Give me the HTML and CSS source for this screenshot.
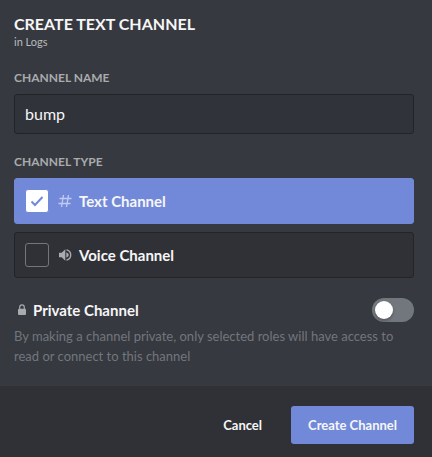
FILE: index.html
```html
<!DOCTYPE html>
<html lang="en">
<head>
<meta charset="utf-8">
<meta name="viewport" content="width=device-width, initial-scale=1">
<title>Create Text Channel</title>
<link rel="stylesheet" href="styles.css">
</head>
<body>
<form class="modal">
  <div class="content">
    <header class="header">
      <h1 class="title">CREATE TEXT CHANNEL</h1>
      <p class="subtitle">in Logs</p>
    </header>

    <div class="field">
      <label class="label" for="name">CHANNEL NAME</label>
      <input class="input" id="name" type="text" value="bump">
    </div>

    <div class="field" role="radiogroup" aria-labelledby="type-label">
      <div class="label" id="type-label">CHANNEL TYPE</div>
      <div class="options">
        <label class="option">
          <input class="option-input" type="radio" name="type" checked>
          <span class="box"><svg class="check" viewBox="0 0 14 14" aria-hidden="true"><path d="M1.5 7.5 5 11 12.5 3"/></svg></span>
          <svg class="option-icon" viewBox="0 0 14 14" fill="none" stroke="currentColor" stroke-width="1.300" aria-hidden="true"><path d="M5.500 1 3.500 13M10.500 1 8.500 13M1.500 4.500H13.500M.5 9.500H12.500"/></svg>
          <span class="option-name">Text Channel</span>
        </label>
        <label class="option">
          <input class="option-input" type="radio" name="type">
          <span class="box"><svg class="check" viewBox="0 0 14 14" aria-hidden="true"><path d="M1.5 7.5 5 11 12.5 3"/></svg></span>
          <svg class="option-icon" viewBox="0 0 14 14" fill="none" stroke="currentColor" aria-hidden="true"><path fill="currentColor" stroke="none" d="M1 4.800H3.700L7.300 1.200V12.800L3.700 9.200H1Z"/><path fill="currentColor" stroke="none" d="M8.300 4.200Q10.800 5.200 10.800 7T8.300 9.800Z"/><path stroke-width="1.400" d="M8.500 1.900A5.200 5.200 0 0 1 8.500 12.100"/></svg>
          <span class="option-name">Voice Channel</span>
        </label>
      </div>
    </div>

    <div class="private">
      <div class="private-row">
        <label class="private-label" for="private">
          <svg class="lock" viewBox="0 0 10 12" aria-hidden="true"><path d="M2.700 5V3.200a2.300 2.300 0 0 1 4.600 0V5" fill="none" stroke="currentColor" stroke-width="1.200"/><rect x="1" y="4.800" width="8" height="6.200" rx="1" fill="currentColor"/></svg>
          Private Channel
        </label>
        <input class="switch" id="private" type="checkbox" role="switch" aria-describedby="private-note">
      </div>
      <p class="note" id="private-note">By making a channel private, only selected roles will have access to read or connect to this channel</p>
    </div>
  </div>

  <footer class="footer">
    <button class="button button-link" type="button">Cancel</button>
    <button class="button button-primary" type="submit">Create Channel</button>
  </footer>
</form>
</body>
</html>
```
FILE: styles.css
```css
* {
  box-sizing: border-box;
}

body {
  margin: 0;
  background: #2f3136;
  color: #f6f6f7;
  font-family: Lato, "Noto Sans", sans-serif;
  font-size: 13px;
}

.content {
  padding: 14px 18px 20px 14px;
  background: #36393f;
}

.header {
  margin-bottom: 20px;
}

.title {
  margin: 0;
  font-size: 16px;
  font-weight: 700;
  line-height: 20px;
}

.subtitle {
  margin: 0;
  color: #b9bbbe;
  font-size: 11px;
  line-height: 16px;
}

.field {
  margin-bottom: 20px;
}

.label {
  display: block;
  margin-bottom: 8px;
  color: #a9abae;
  font-size: 12px;
  font-weight: 700;
  line-height: 16px;
}

.input {
  display: block;
  width: 100%;
  height: 40px;
  padding: 0 10px 2px;
  border: 1px solid #222427;
  border-radius: 3px;
  outline: 0;
  background: #303339;
  color: #f6f6f7;
  font: inherit;
  font-size: 16px;
}

.options {
  display: grid;
  gap: 8px;
}

.option {
  display: flex;
  align-items: center;
  height: 46px;
  padding: 0 10px;
  border: 1px solid #222427;
  border-radius: 3px;
  background: #303136;
}

.option:has(:checked) {
  border-color: #7289da;
  background: #7289da;
}

.option-input {
  position: absolute;
  opacity: 0;
}

.box {
  display: grid;
  place-items: center;
  width: 24px;
  height: 24px;
  border: 1px solid #72767d;
  border-radius: 3px;
}

.check {
  width: 14px;
  height: 14px;
  fill: none;
  stroke: #7289da;
  stroke-width: 2;
  visibility: hidden;
}

.option-input:checked + .box {
  border-color: #7289da;
  background: #fff;
}

.option-input:checked + .box .check {
  visibility: visible;
}

.option-icon {
  width: 14px;
  height: 14px;
  margin: 0 7px 0 9px;
  color: #a9abae;
}

.option:has(:checked) .option-icon {
  color: #c1cbef;
}

.option-name,
.private-label {
  font-size: 15px;
  font-weight: 700;
  line-height: 20px;
}

.private-row {
  display: flex;
  align-items: center;
  justify-content: space-between;
}

.private-label {
  display: flex;
  align-items: center;
  gap: 6px;
}

.lock {
  width: 10px;
  height: 12px;
  margin-left: 3px;
  color: #a9abae;
}

.switch {
  appearance: none;
  width: 42px;
  height: 24px;
  margin: 0;
  padding: 3px;
  border-radius: 12px;
  background: #72767d;
}

.switch::before {
  content: "";
  display: block;
  width: 18px;
  height: 18px;
  border-radius: 50%;
  background: #fff;
  box-shadow: 0 2px 3px rgba(0, 0, 0, 0.25);
}

.switch:checked {
  background: #7289da;
}

.switch:checked::before {
  margin-left: auto;
}

.note {
  margin: 4px 0 0;
  color: #72767d;
  line-height: 20px;
}

.footer {
  display: flex;
  justify-content: flex-end;
  gap: 12px;
  padding: 20px 18px 13px;
  background: #2f3136;
}

.button {
  height: 38px;
  padding: 0 17px;
  border: 0;
  border-radius: 3px;
  background: transparent;
  color: #f6f6f7;
  font: inherit;
  font-weight: 700;
}

.button-primary {
  background: #7289da;
}
```
